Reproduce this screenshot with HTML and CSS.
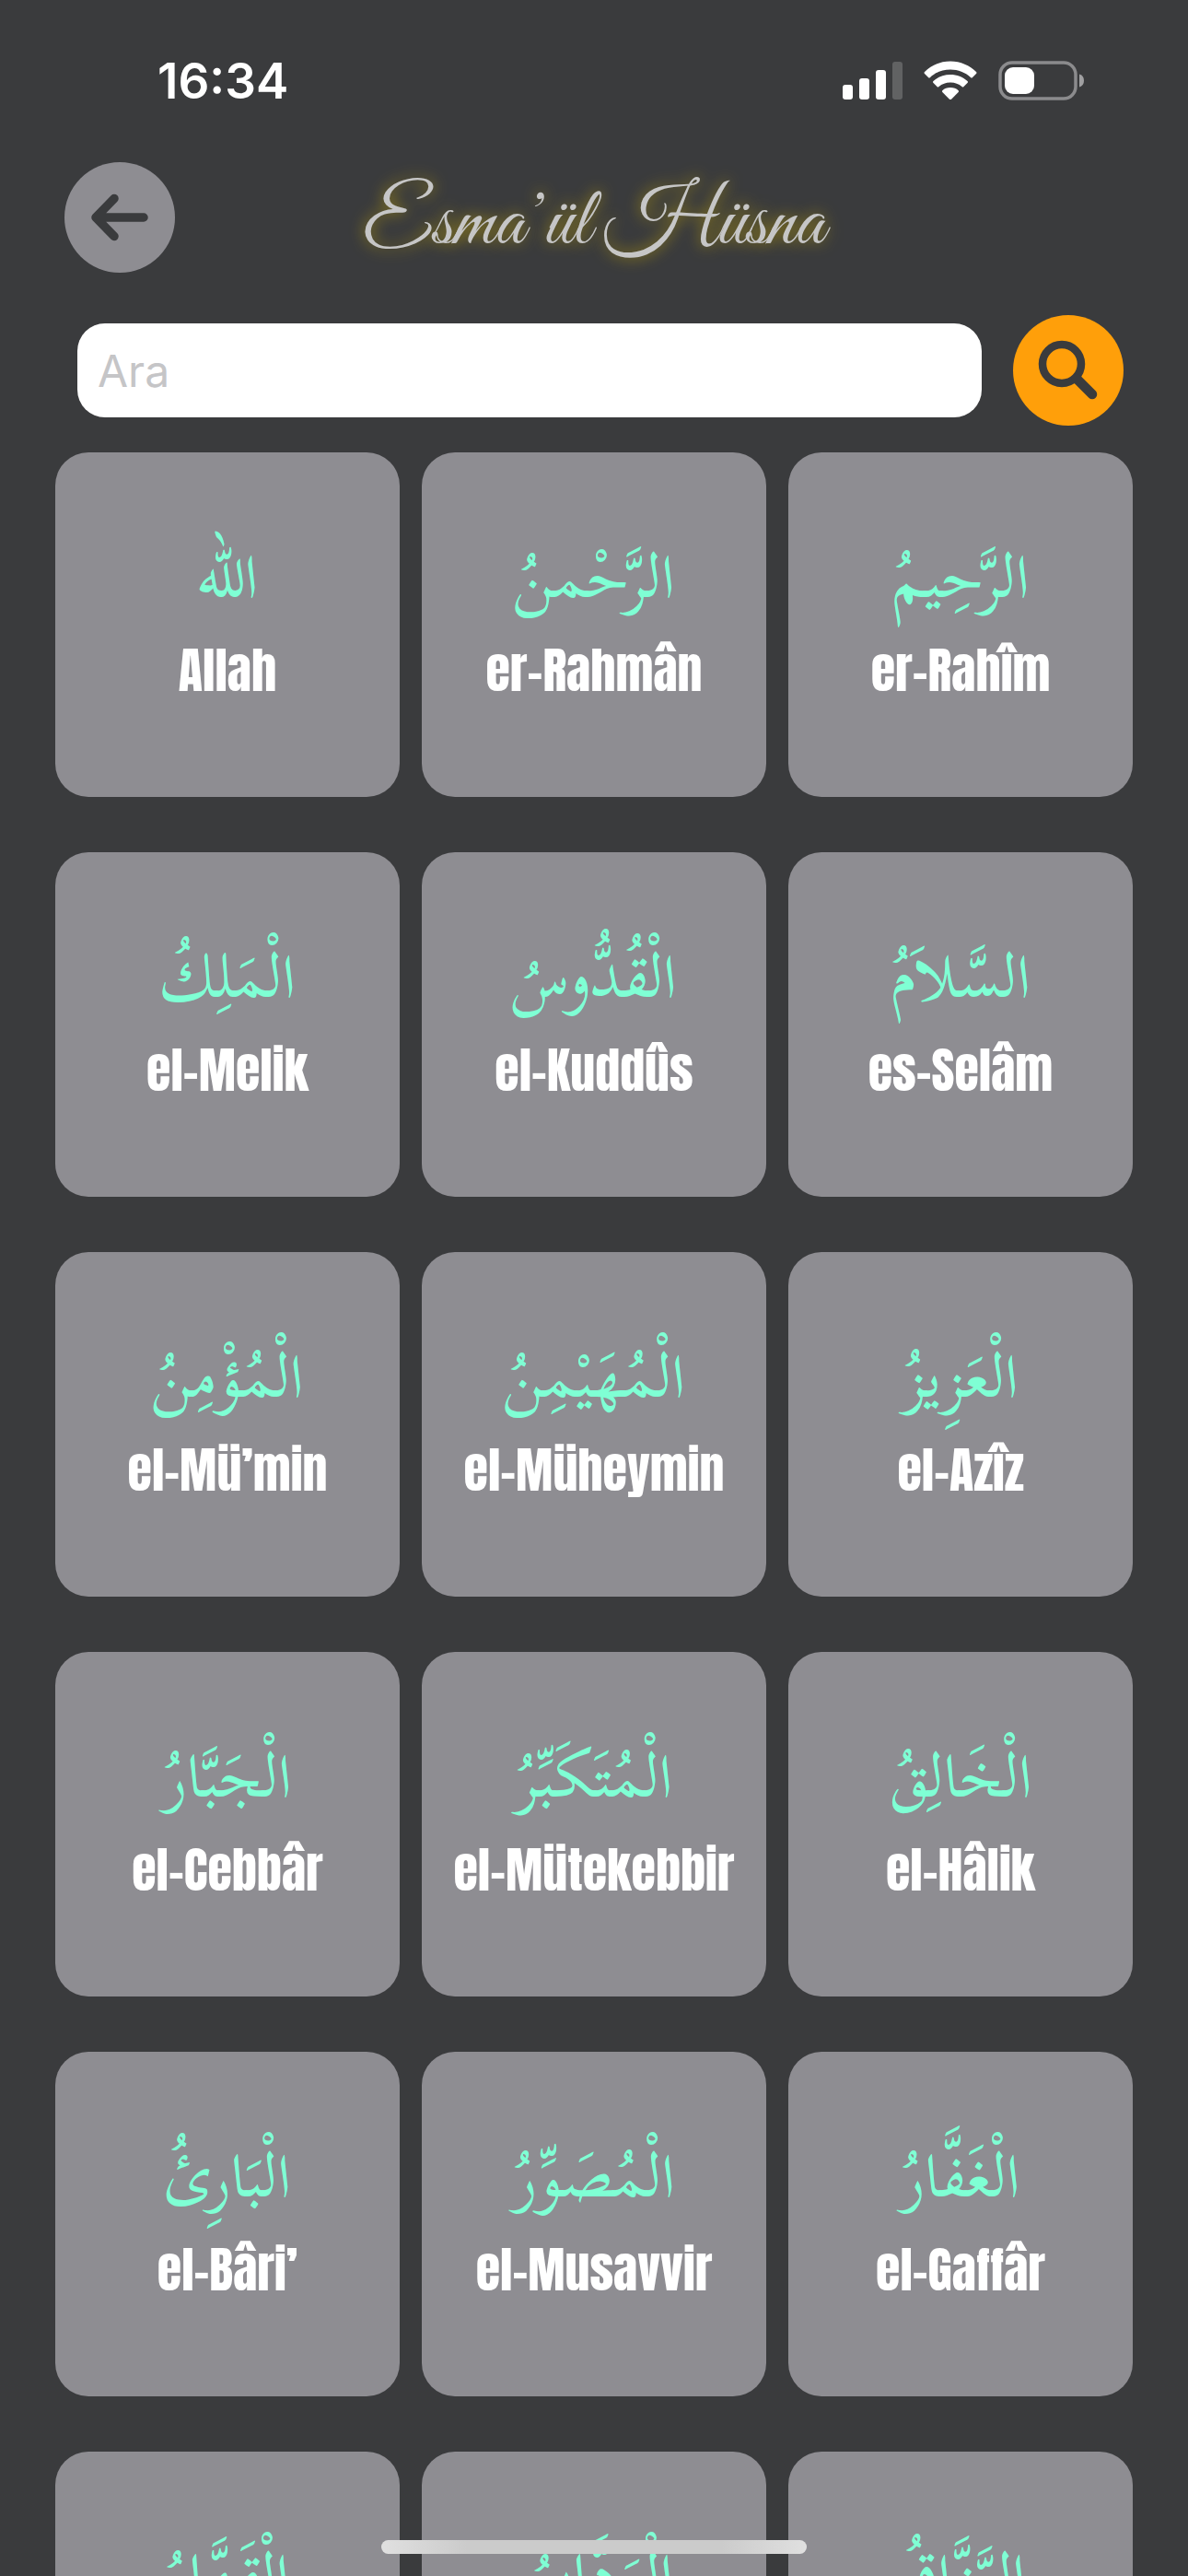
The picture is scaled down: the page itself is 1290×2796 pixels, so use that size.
FILE: index.html
```html
<!DOCTYPE html>
<html lang="tr">
<head>
<meta charset="utf-8">
<meta name="viewport" content="width=device-width, initial-scale=1">
<title>Esma’ül Hüsna</title>
<link rel="stylesheet" href="styles.css">
</head>
<body>
<div class="status">
  <span class="time">16:34</span>
  <div class="status-icons">
    <svg width="65" height="44" viewBox="0 0 65 44" aria-hidden="true"><g fill="#fff"><rect y="26" width="11" height="16" rx="3"/><rect x="18" y="19" width="11" height="23" rx="3"/><rect x="36" y="10" width="11" height="32" rx="3"/><rect x="54" y="1" width="11" height="41" rx="3" opacity=".2"/></g></svg>
    <svg width="58" height="44" viewBox="0 0 58 44" aria-hidden="true"><g fill="#fff"><path d="M29 0.500C40 .5 50 5 57 12Q58 13 57 14L53 18Q52 19 51 18C45 12.500 37.500 9.500 29 9.500S13 12.500 7 18Q6 19 5 18L1 14Q0 13 1 12C8 5 18 .5 29 .5Z"/><path d="M29 15C36 15 42.500 17.500 47.500 22Q48.500 23 47.500 24L43.500 28Q42.500 29 41.500 28C38 25 34 23.500 29 23.500S20 25 16.500 28Q15.500 29 14.500 28L10.500 24Q9.500 23 10.500 22C15.500 17.500 22 15 29 15Z"/><path d="M29 29C32.500 29 35.500 30.200 37.700 32.200Q38.500 33 37.700 34L30 41.700Q29 42.500 28 41.700L20.300 34Q19.500 33 20.300 32.200C22.500 30.200 25.500 29 29 29Z"/></g></svg>
    <svg width="94" height="44" viewBox="0 0 94 44" aria-hidden="true"><rect x="2" y="2" width="82" height="39" rx="13" fill="none" stroke="#8b8b8d" stroke-width="3.500"/><rect x="7" y="7" width="32" height="29" rx="9" fill="#fff"/><path d="M88 14.500Q93 16 93 21.500T88 28.500Z" fill="#a0a0a2"/></svg>
  </div>
</div>
<header class="header">
  <button class="round back" type="button" aria-label="Geri">
    <svg width="120" height="120" viewBox="0 0 120 120" aria-hidden="true"><path d="M54 39.500L34 60L54 80.500M35 60H86" fill="none" stroke="#3a3b3d" stroke-width="9.500" stroke-linecap="round" stroke-linejoin="round"/></svg>
  </button>
  <h1 class="title">Esma’ül Hüsna</h1>
</header>
<form class="search" role="search">
  <input class="field" type="text" placeholder="Ara" aria-label="Ara">
  <button class="round go" type="button" aria-label="Ara">
    <svg width="120" height="120" viewBox="0 0 120 120" aria-hidden="true"><g fill="none" stroke="#3a3b3d"><circle cx="53" cy="53" r="21" stroke-width="8.500"/><path d="M69 69L86 86" stroke-width="10.500" stroke-linecap="round"/></g></svg>
  </button>
</form>
<main class="list">
  <ul class="grid">
    <li><button class="card" type="button"><span class="ar" lang="ar" dir="rtl">الله</span><span class="name">Allah</span></button></li>
    <li><button class="card" type="button"><span class="ar" lang="ar" dir="rtl">الرَّحْمنُ</span><span class="name">er-Rahmân</span></button></li>
    <li><button class="card" type="button"><span class="ar" lang="ar" dir="rtl">الرَّحِيمُ</span><span class="name">er-Rahîm</span></button></li>
    <li><button class="card" type="button"><span class="ar" lang="ar" dir="rtl">الْمَلِكُ</span><span class="name">el-Melik</span></button></li>
    <li><button class="card" type="button"><span class="ar" lang="ar" dir="rtl">الْقُدُّوسُ</span><span class="name">el-Kuddûs</span></button></li>
    <li><button class="card" type="button"><span class="ar" lang="ar" dir="rtl">السَّلاَمُ</span><span class="name">es-Selâm</span></button></li>
    <li><button class="card" type="button"><span class="ar" lang="ar" dir="rtl">الْمُؤْمِنُ</span><span class="name">el-Mü’min</span></button></li>
    <li><button class="card" type="button"><span class="ar" lang="ar" dir="rtl">الْمُهَيْمِنُ</span><span class="name">el-Müheymin</span></button></li>
    <li><button class="card" type="button"><span class="ar" lang="ar" dir="rtl">الْعَزِيزُ</span><span class="name">el-Azîz</span></button></li>
    <li><button class="card" type="button"><span class="ar" lang="ar" dir="rtl">الْجَبَّارُ</span><span class="name">el-Cebbâr</span></button></li>
    <li><button class="card" type="button"><span class="ar" lang="ar" dir="rtl">الْمُتَكَبِّرُ</span><span class="name">el-Mütekebbir</span></button></li>
    <li><button class="card" type="button"><span class="ar" lang="ar" dir="rtl">الْخَالِقُ</span><span class="name">el-Hâlik</span></button></li>
    <li><button class="card" type="button"><span class="ar" lang="ar" dir="rtl">الْبَارِئُ</span><span class="name">el-Bâri’</span></button></li>
    <li><button class="card" type="button"><span class="ar" lang="ar" dir="rtl">الْمُصَوِّرُ</span><span class="name">el-Musavvir</span></button></li>
    <li><button class="card" type="button"><span class="ar" lang="ar" dir="rtl">الْغَفَّارُ</span><span class="name">el-Gaffâr</span></button></li>
    <li><button class="card" type="button"><span class="ar" lang="ar" dir="rtl">الْقَهَّارُ</span></button></li>
    <li><button class="card" type="button"><span class="ar" lang="ar" dir="rtl">الْوَهَّابُ</span></button></li>
    <li><button class="card" type="button"><span class="ar" lang="ar" dir="rtl">الرَّزَّاقُ</span></button></li>
  </ul>
</main>
<div class="home-indicator"></div>
</body>
</html>
```
FILE: styles.css
```css
* { box-sizing: border-box; }

body {
  margin: 0;
  height: 100vh;
  display: flex;
  flex-direction: column;
  background: #3a3b3d;
  color: #fff;
  font-family: Inter, "Liberation Sans", sans-serif;
}

button { border: 0; padding: 0; font: inherit; color: inherit; cursor: pointer; }

.status {
  display: flex;
  justify-content: space-between;
  align-items: center;
  padding: 56px 112px 0 171px;
}
.time { font-size: 53px; line-height: 64px; font-weight: 600; }
.status-icons { display: flex; gap: 23px; }

.header {
  display: grid;
  grid-template-columns: 120px 1fr 120px;
  align-items: start;
  padding: 56px 70px 0;
}
.round { width: 120px; height: 120px; border-radius: 50%; flex: none; }
.round svg { display: block; }
.back { background: #8e8d92; }
.title {
  margin: 0;
  padding-top: 8px;
  text-align: center;
  font-family: "Great Vibes", "Liberation Serif", serif;
  font-weight: 400;
  font-size: 88px;
  line-height: 120px;
  color: #c6c6c6;
  text-shadow: 0 0 16px #a08a14;
}

.search {
  display: flex;
  align-items: center;
  gap: 34px;
  padding: 38px 70px 29px 84px;
}
.field {
  flex: 1;
  min-width: 0;
  height: 102px;
  padding: 0 22px;
  border: 0;
  border-radius: 30px;
  background: #fff;
  color: #000;
  font: inherit;
  font-size: 48px;
}
.field::placeholder { color: #c5c5c7; opacity: 1; }
.go { background: #ff9f0a; }

.list { flex: 1; min-height: 0; overflow-y: auto; scrollbar-width: none; }
.grid {
  list-style: none;
  margin: 0;
  padding: 0 60px;
  display: grid;
  grid-template-columns: repeat(3, 1fr);
  gap: 60px 24px;
}
.card {
  width: 100%;
  aspect-ratio: 1;
  padding-top: 88px;
  border-radius: 36px;
  background: #8e8d92;
  display: flex;
  flex-direction: column;
  align-items: center;
  justify-content: flex-start;
}
.ar {
  font-family: "Scheherazade New", "DejaVu Sans", serif;
  font-weight: 500;
  font-size: 66px;
  line-height: 96px;
  color: #7fffd4;
}
.name {
  font-family: Anton, Roboto, sans-serif;
  font-weight: 400;
  font-size: 54px;
  line-height: 104px;
  white-space: nowrap;
}

.home-indicator {
  position: fixed;
  left: 50%;
  bottom: 24px;
  width: 462px;
  height: 15px;
  margin-left: -231px;
  border-radius: 8px;
  background: linear-gradient(90deg, #e0e0e0, #cbcbcb 20%, #cbcbcb 80%, #e0e0e0);
}
```
